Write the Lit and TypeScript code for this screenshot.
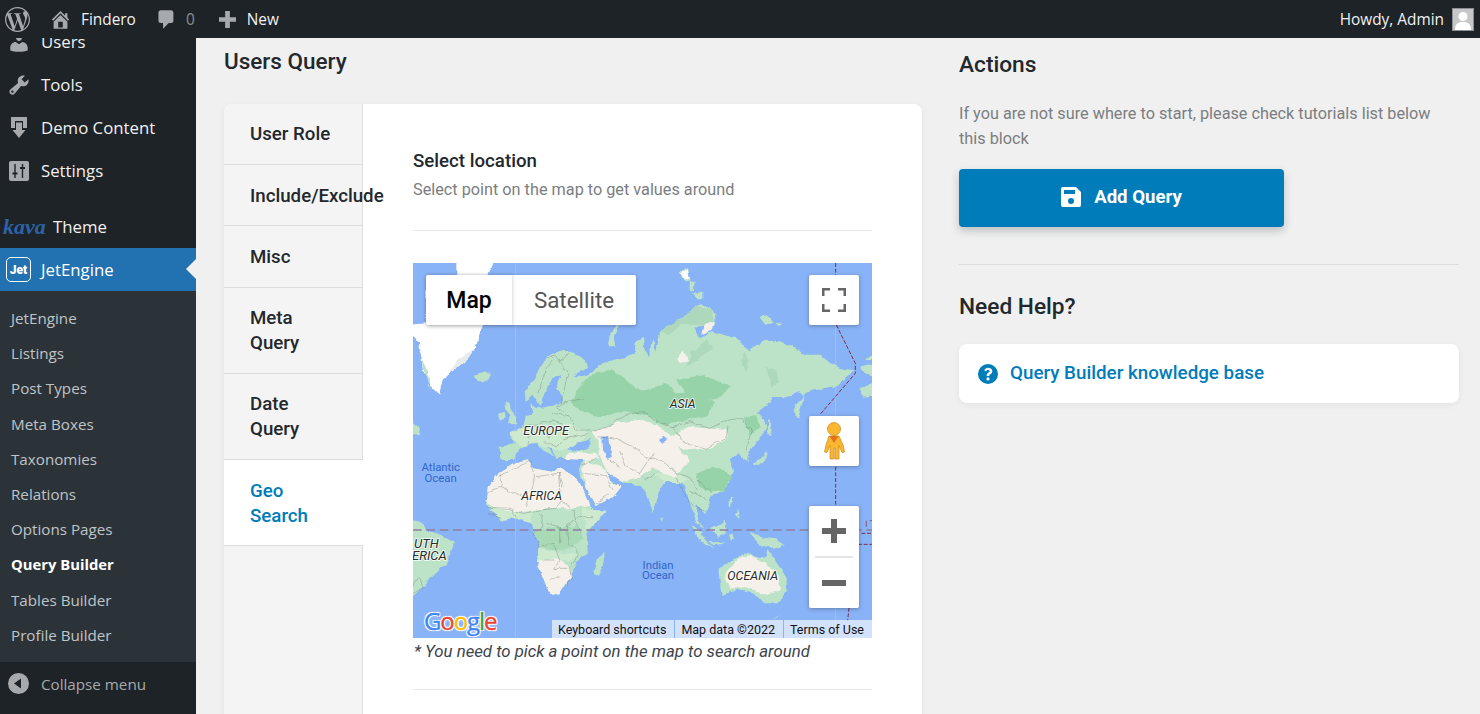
import { LitElement, html, svg, css } from "lit";
import { customElement } from "lit/decorators.js";

const WP = "M21.469 6.825c.84 1.537 1.318 3.3 1.318 5.175 0 3.979-2.156 7.456-5.363 9.325l3.295-9.527c.615-1.54.82-2.771.82-3.864 0-.405-.026-.78-.07-1.11m-7.981.105c.647-.03 1.232-.105 1.232-.105.582-.075.514-.93-.067-.899 0 0-1.755.135-2.88.135-1.064 0-2.85-.15-2.85-.15-.585-.03-.661.855-.075.885 0 0 .54.061 1.125.09l1.68 4.605-2.37 7.08L5.354 6.9c.649-.03 1.234-.1 1.234-.1.585-.075.516-.93-.065-.896 0 0-1.746.138-2.874.138-.2 0-.438-.008-.69-.015C4.911 3.15 8.235 1.215 12 1.215c2.809 0 5.365 1.072 7.286 2.833-.046-.003-.091-.009-.141-.009-1.06 0-1.812.923-1.812 1.914 0 .89.513 1.643 1.06 2.531.411.72.89 1.643.89 2.977 0 .915-.354 1.994-.821 3.479l-1.075 3.585-3.9-11.61.001.014zM12 22.784c-1.059 0-2.081-.153-3.048-.437l3.237-9.406 3.315 9.087c.024.053.05.101.078.149-1.12.393-2.325.609-3.582.609M1.211 12c0-1.564.336-3.05.935-4.39L7.29 21.709C3.694 19.96 1.212 16.271 1.211 12M12 0C5.385 0 0 5.385 0 12s5.385 12 12 12 12-5.385 12-12S18.615 0 12 0";
const HOME = "M16 8.5l1.53 1.53-1.06 1.06L10 4.62l-6.47 6.47-1.06-1.06L10 2.5l4 4v-2h2v4zm-6-2.46l6 5.99V18H4v-5.97zM12 17v-5H8v5h4z";
const COMMENT = "M5 2h9c1.1 0 2 .9 2 2v7c0 1.1-.9 2-2 2h-2l-5 5v-5H5c-1.1 0-2-.9-2-2V4c0-1.1.9-2 2-2z";
const USERS = "M10 9.25c-2.27 0-2.73-3.44-2.73-3.44C7 4.02 7.82 2 9.97 2c2.16 0 2.98 2.02 2.71 3.81 0 0-.41 3.44-2.68 3.44zm0 2.57L12.72 10c2.39 0 4.52 2.33 4.52 4.53v2.49s-3.65 1.13-7.24 1.13c-3.65 0-7.24-1.13-7.24-1.13v-2.49c0-2.25 1.94-4.48 4.47-4.48z";
const TOOLS = "M16.68 9.77c-1.34 1.34-3.3 1.67-4.95.99l-5.41 6.52c-.99.99-2.59.99-3.58 0s-.99-2.59 0-3.57l6.52-5.42c-.68-1.65-.35-3.61.99-4.95 1.28-1.28 3.12-1.62 4.72-1.06l-2.89 2.89 2.82 2.82 2.86-2.87c.53 1.58.18 3.39-1.08 4.67zM3.81 16.21c.4.39 1.04.39 1.43 0 .4-.4.4-1.04 0-1.43-.39-.4-1.03-.4-1.43 0-.39.39-.39 1.03 0 1.43z";

const LAND: string[] = [
  // Eurasia
  "338,425 335,395 350,375 372,340 395,300 405,285 440,272 470,275 500,290 525,312 528,325 495,335 482,348 505,352 540,335 560,312 600,300 640,290 665,280 668,245 690,232 695,270 705,292 718,240 730,275 741,219 771,194 811,174 851,134 866,129 911,159 906,194 871,194 846,204 856,234 896,214 931,224 966,234 991,254 1006,271 1056,239 1101,244 1151,264 1171,284 1221,284 1251,309 1281,324 1321,331 1306,349 1266,379 1231,384 1191,394 1171,404 1151,399 1111,414 1081,414 1056,439 1031,459 1051,474 1060,500 1050,525 1030,545 1012,570 1000,602 985,590 975,578 950,595 960,630 950,670 915,700 890,705 890,735 880,760 862,742 845,735 858,785 872,808 850,790 832,735 816,680 801,665 781,670 761,655 741,685 721,760 701,700 681,675 655,668 630,668 600,650 575,630 580,650 600,668 625,680 600,712 548,735 525,695 505,650 500,620 510,600 480,597 455,597 445,590 430,597 415,570 395,545 410,575 425,592 405,585 372,552 340,556 318,570 302,600 262,600 260,560 305,552 290,520 330,505 338,470 358,462 352,425 372,445 420,437 450,422 440,405 428,380 445,345 420,355 400,385 380,440 362,408",
  // Africa
  "218,725 225,680 255,640 300,610 345,598 360,625 415,635 440,625 492,652 515,700 540,750 580,752 555,780 520,820 525,880 490,905 475,950 440,1000 410,1005 395,965 372,905 380,860 360,810 355,780 300,775 265,780 235,755",
  // South America
  "-20,780 30,785 40,810 85,825 122,845 120,860 100,910 60,945 30,980 10,1000 -20,1035",
  // Australia
  "916,930 966,895 1006,880 1026,890 1061,890 1066,870 1091,905 1121,955 1121,990 1091,1030 1056,1030 1021,1000 971,990 926,1005 921,970",
  // New Guinea
  "1010,815 1050,830 1090,835 1115,855 1100,865 1060,860 1030,850",
  // UK, Ireland
  "285,422 298,450 312,490 285,490 292,465 275,445", "258,460 275,455 278,475 262,482",
  // Iceland
  "185,344 215,334 235,344 225,364 195,364",
  // Novaya Zemlya
  "620,195 605,230 610,265 590,255 585,235 605,200",
  // Svalbard / Arctic islands
  "800,35 825,25 832,60 815,70", "830,65 845,65 842,90 830,90", "840,95 868,100 868,118 850,118",
  "1040,175 1060,165 1085,185 1055,195", "1090,185 1110,190 1095,195",
  // Kamchatka strip, Sakhalin
  "1141,470 1150,430 1175,405 1165,440 1155,475", "1065,480 1075,495 1075,530 1065,515",
  // Japan
  "1015,610 1045,595 1065,570 1060,595 1040,615", "970,770 975,745 980,760",
  // Alaska
  "1340,325 1400,305 1400,345 1355,345", "1340,385 1400,360 1400,405 1350,410", "1360,300 1400,270 1400,300",
  // Madagascar, Sri Lanka
  "542,945 555,895 575,878 570,915 555,950", "737,775 746,775 745,790",
  // Indonesia
  "835,795 860,815 885,850 905,860 880,855 850,830", "890,805 920,795 935,782 938,820 915,830", "945,825 955,820 965,835 950,845", "885,845 940,850 905,855",
  "950,712 958,710 955,735 950,740", "966,760 980,765 978,778",
  // New Zealand
  "1090,1075 1110,1060 1095,1075 1080,1080",
  // Greenland SW rim
  "25,300 45,330 50,390 35,340", "-20,470 15,500 22,520 -20,520",
];
const DARK: string[] = [
  "470,430 500,385 530,345 600,330 650,370 690,395 760,370 790,400 860,395 905,430 880,470 770,490 700,465 620,455 555,475 500,450",
  "790,360 870,345 960,380 900,420 820,410",
  "850,640 905,620 960,650 930,690 890,695 860,680",
  "720,460 790,470 760,500 730,490",
  "990,470 1030,465 1040,500 1010,530",
];
const MID: string[] = [
  "360,815 400,805 440,800 500,800 510,835 470,865 420,875 380,855",
];
const TUNDRA: string[] = [
  "835,280 880,240 900,265 855,300 820,320", "741,219 771,194 811,174 851,134 900,150 905,190 850,195 800,195 760,225",
  "1060,320 1090,330 1100,370 1075,380", "990,275 1010,300 995,340 985,300",
];
const SAND: string[] = [
  "535,515 600,490 680,480 745,502 770,532 830,500 940,510 945,530 900,562 840,570 790,558 830,600 790,650 720,625 680,650 625,665 585,640 560,590 560,540",
  "505,625 520,600 578,630 595,668 625,680 600,712 548,735 525,695",
  "462,578 550,578 560,598 510,600 455,596",
  "218,725 225,680 255,640 300,610 345,598 360,625 415,635 440,625 492,652 515,700 530,735 480,745 400,745 330,755 250,745",
  "372,905 430,895 470,920 475,950 440,1000 410,1005 395,965",
  "935,945 970,900 1010,885 1060,910 1095,950 1105,990 1060,1005 1000,985 950,985",
  "792,290 815,275 825,300 800,310",
  "875,190 905,190 895,210 868,222",
];
const LIGHT: string[] = [
  "230,745 300,745 350,740 360,790 300,775 265,780", "505,745 540,750 580,752 555,780 520,810 510,775",
  "380,865 440,880 500,880 470,905 430,900 372,905", "290,520 335,505 450,490 520,510 500,560 430,570 370,550 320,560",
  "720,640 800,640 830,660 790,670 750,660",
];
const WATER: string[] = [
  "462,568 490,548 530,540 528,565 500,575",
  "568,530 585,528 590,560 600,590 585,596 570,570",
  "738,540 752,530 762,540 745,550",
];
const BORDERS: string[] = [
  "405,290 425,285 440,300 470,280", "375,400 390,350 425,290", "440,300 465,340 450,400 445,430 430,440 450,455", "445,430 510,415", "420,460 470,470 490,510 530,510",
  "340,500 420,480 450,490", "395,545 430,560 450,540 520,520", "380,500 410,540", "345,555 350,510",
  "535,515 600,490 640,465 690,455 740,490 780,500 830,485 890,505 945,480 985,475 1015,515 1000,570",
  "780,500 810,545 880,565 940,530 945,500", "560,530 620,540 660,560 700,590 740,600 790,640 830,650 850,690", "620,570 640,620 680,640 720,580",
  "590,600 620,620", "505,615 560,590", "515,640 580,650 600,690", "548,730 590,700", "680,640 700,660 730,640", "790,650 810,700 840,740 880,750", "830,690 880,720", "850,660 890,690",
  "262,645 305,625 350,600 365,650 440,640 450,680", "265,640 262,680 220,700", "262,680 325,710", "365,650 355,700 340,740", "440,640 445,720 480,750 490,790 510,820", "225,742 290,745 330,760", "330,760 380,750 430,745 450,720",
  "380,760 390,800 360,820 380,860 420,850 440,900 425,925 470,925 500,880 470,850 460,800 500,770 540,770", "430,800 470,820", "400,790 440,800 440,850",
  "395,900 425,900", "470,925 475,955 460,975", "225,760 265,775", "300,745 310,775", "410,960 440,950",
  "0,975 20,950 30,985", "0,1000 25,985",
];
const poly = (pts: string[], cls: string) => pts.map((p) => svg`<polygon class=${cls} points=${p}></polygon>`);

@customElement("world-map")
class WorldMap extends LitElement {
  static styles = css`
    :host { display: block; position: relative; width: 459px; height: 375px; overflow: hidden; background: #89b3f7; font-family: Roboto, sans-serif; }
    svg.world { display: block; width: 459px; height: 375px; }
    .land { fill: #bce3c8; }
    .dark { fill: #97d3a8; }
    .mid { fill: #a9dab6; }
    .tundra { fill: #add8bb; }
    .sand { fill: #f5f1ea; }
    .light { fill: #cdeacf; }
    .water { fill: #89b3f7; }
    .ice { fill: #fff; }
    .ice2 { fill: #e8ebe9; }
    .border { fill: none; stroke: #6f7f73; stroke-width: 2; opacity: .6; }
    .label { font: italic 400 39px Roboto, sans-serif; fill: #2b2b2b; stroke: rgba(255,255,255,.8); stroke-width: 6; paint-order: stroke; stroke-linejoin: round; }
    .ocean { font: 400 34px Roboto, sans-serif; fill: #2f67c9; text-anchor: middle; }
    .grid { stroke: #a9c7f5; stroke-width: 2; fill: none; }
    .eq { stroke: #8f7e9e; stroke-width: 4; stroke-dasharray: 26 14; fill: none; }
    .dl { stroke: #7d2d48; stroke-width: 3; stroke-dasharray: 12 5; fill: none; }
    .dl2 { stroke: #8f6a90; stroke-width: 4; stroke-dasharray: 18 10; fill: none; }
    .glogo { position: absolute; left: 11px; top: 341px; font: 400 24px "Open Sans", sans-serif; letter-spacing: -1.1px; line-height: 34px; text-shadow: -1px -1px 0 #fff, 1px -1px 0 #fff, -1px 1px 0 #fff, 1px 1px 0 #fff, 0 0 3px #fff; -webkit-text-stroke: .4px currentColor; }
    .b { color: #4285f4; } .r { color: #ea4335; } .y { color: #fbbc05; } .g { color: #34a853; }
    .ctl { position: absolute; background: #fff; border-radius: 2px; box-shadow: 0 1px 4px rgba(0,0,0,.3); display: flex; align-items: center; justify-content: center; }
    .types { left: 13px; top: 12px; width: 210px; height: 50px; justify-content: flex-start; font-size: 22.400px; }
    .tmap { width: 86px; height: 50px; display: flex; align-items: center; justify-content: center; color: #000; font-weight: 500; font-size: 23px; box-shadow: 1px 0 3px rgba(0,0,0,.15); }
    .tsat { flex: 1; text-align: center; color: #565656; }
    .full { left: 396px; top: 12px; width: 50px; height: 50px; }
    .peg { left: 396px; top: 153px; width: 50px; height: 50px; }
    .zoom { left: 396px; top: 243px; width: 50px; height: 102px; flex-direction: column; }
    .zoom i { display: block; width: 38px; height: 2px; background: #e6e6e6; }
    .zoom div { flex: 1; display: flex; align-items: center; justify-content: center; }
    .attr { position: absolute; right: 0; bottom: 0; height: 18px; display: flex; font-size: 12.500px; line-height: 19px; color: #111; }
    .attr span { background: rgba(255,255,255,.62); padding: 0 8px 0 6px; margin-left: 1px; white-space: nowrap; }
  `;
  render() {
    return html`
      <svg class="world" viewBox="0 9 1377 1125">
        <defs>
          <filter id="coast" filterUnits="userSpaceOnUse" x="-40" y="-40" width="1460" height="1220" color-interpolation-filters="sRGB">
            <feTurbulence type="fractalNoise" baseFrequency=".035" numOctaves="3" seed="4" result="n"></feTurbulence>
            <feDisplacementMap in="SourceGraphic" in2="n" scale="16" xChannelSelector="R" yChannelSelector="G"></feDisplacementMap>
          </filter>
        </defs>
        <line class="grid" x1="307" y1="9" x2="307" y2="1134"></line>
        <line class="grid" x1="1268" y1="9" x2="1268" y2="1134"></line>
        <g filter="url(#coast)">
          <polygon class="ice" points="130,-20 245,-20 225,50 210,195 195,235 185,265 165,295 130,325 90,355 78,405 50,375 30,330 25,290 15,250 -20,195 40,190 40,50 130,50"></polygon>
          <polygon class="ice2" points="185,265 165,295 130,325 108,340 135,300 160,280"></polygon>
          ${poly(LAND, "land")}
          ${poly(LIGHT, "light")}
          ${poly(TUNDRA, "tundra")}
          ${poly(DARK, "dark")}
          ${poly(MID, "mid")}
          ${poly(SAND, "sand")}
          ${poly(WATER, "water")}
          <polygon class="ice" points="805,40 825,28 830,55 812,62"></polygon>
          ${BORDERS.map((p) => svg`<polyline class="border" points=${p}></polyline>`)}
        </g>
        <line class="eq" x1="0" y1="810" x2="1377" y2="810"></line>
        <path class="dl" d="M1268 9V50M1270 195L1327 310V340L1220 465M1268 620V738M1308 1043L1304 1082M1345 820H1377M1335 853H1377"></path>
        <path class="dl2" d="M1360 800V782H1377"></path>
        <text class="label" x="331" y="524" textLength="137" lengthAdjust="spacingAndGlyphs">EUROPE</text>
        <text class="label" x="770" y="443" textLength="78" lengthAdjust="spacingAndGlyphs">ASIA</text>
        <text class="label" x="325" y="721" textLength="122" lengthAdjust="spacingAndGlyphs">AFRICA</text>
        <text class="label" x="943" y="961" textLength="152" lengthAdjust="spacingAndGlyphs">OCEANIA</text>
        <text class="label"><tspan x="3" y="865">UTH</tspan><tspan x="-3" y="900">ERICA</tspan></text>
        <text class="ocean"><tspan x="83" y="632">Atlantic</tspan><tspan x="83" y="666">Ocean</tspan></text>
        <text class="ocean"><tspan x="735" y="927">Indian</tspan><tspan x="735" y="958">Ocean</tspan></text>
      </svg>
      <div class="glogo"><span class="b">G</span><span class="r">o</span><span class="y">o</span><span class="b">g</span><span class="g">l</span><span class="r">e</span></div>
      <div class="attr"><span>Keyboard shortcuts</span><span>Map data ©2022</span><span>Terms of Use</span></div>
      <div class="ctl types"><div class="tmap">Map</div><div class="tsat">Satellite</div></div>
      <div class="ctl full">
        <svg width="24" height="24" viewBox="0 0 24 24" fill="#666"><path d="M0 0h8v2.500H2.500V8H0zM16 0h8v8h-2.500V2.500H16zM0 16h2.500v5.500H8V24H0zM21.500 16H24v8h-8v-2.500h5.500z"></path></svg>
      </div>
      <div class="ctl peg">
        <svg width="22" height="38" viewBox="0 0 22 38">
          <circle cx="11" cy="7" r="6.500" fill="#fdb62f" stroke="#c58a1c" stroke-width=".7"></circle>
          <path d="M6 14h10l4 9 1.500 7-2.500.5-3-7V37h-4V26h-1v11H7V23.500l-3 7-2.500-.5L3 23z" fill="#fdb62f" stroke="#c58a1c" stroke-width=".7"></path>
          <path d="M6.500 14h9L11 21z" fill="#e2711d"></path>
        </svg>
      </div>
      <div class="ctl zoom">
        <div><svg width="24" height="24" viewBox="0 0 24 24" fill="#666"><path d="M9 0h6v9h9v6h-9v9H9v-9H0V9h9z"></path></svg></div>
        <i></i>
        <div><svg width="24" height="6" viewBox="0 0 24 6" fill="#666"><rect width="24" height="6"></rect></svg></div>
      </div>
    `;
  }
}

@customElement("app-root")
export class AppRoot extends LitElement {
  static styles = css`
    :host { display: block; width: 100%; height: 100vh; overflow: hidden; font-family: Roboto, sans-serif; background: #f0f0f0; color: #23282d; }
    .bar { height: 38px; background: #1d2327; display: flex; align-items: center; font-family: "Open Sans", sans-serif; font-size: 15.400px; color: #f0f0f1; }
    .bar svg { fill: #a7aaad; display: block; flex: none; }
    .wp { margin-left: 5px; }
    .home { margin-left: 19px; }
    .site { margin-left: 9px; }
    .cm { margin-left: 19px; }
    .cnt { margin-left: 8px; color: #8c8f94; }
    .plus { margin-left: 24px; }
    .new { margin-left: 11px; }
    .howdy { margin-left: auto; }
    .avatar { margin: 0 6px 0 8px; width: 22px; height: 23px; background: #c7c7c7; border: 1px solid #8c8f94; box-sizing: border-box; }
    .avatar svg { fill: #fff; }

    .body { display: flex; height: 676px; }
    .side { width: 196px; flex: none; background: #1d2327; display: flex; flex-direction: column; overflow: hidden; font-family: "Open Sans", sans-serif; color: #f0f0f1; }
    .item { height: 43px; flex: none; display: flex; align-items: center; font-size: 16.800px; position: relative; box-sizing: border-box; }
    .item svg { fill: #a7aaad; flex: none; display: block; }
    .ic { width: 41px; flex: none; display: flex; justify-content: center; padding-right: 3px; box-sizing: border-box; }
    .users { margin-top: -18px; }
    .theme { margin-top: 13px; }
    .kava { font: italic 700 22px "Liberation Serif", serif; color: #2c62a6; width: 53px; padding-left: 3px; box-sizing: border-box; flex: none; }
    .active { background: #2271b1; color: #fff; }
    .jet { width: 25px; height: 25px; margin-left: 6px; margin-right: 10px; border: 1px solid #fff; border-radius: 5px; box-sizing: border-box; flex: none; display: flex; align-items: center; justify-content: center; font: 900 12px Roboto, sans-serif; color: #fff; }
    .active::after { content: ""; position: absolute; right: 0; top: 11px; border: 10.500px solid transparent; border-left: 0; border-right-color: #f0f0f0; }
    .sub { background: #2c3338; padding: 9.500px 0; flex: none; }
    .sub div { height: 35.200px; display: flex; align-items: center; padding-left: 11px; font-size: 15.200px; color: #bfc4c8; }
    .sub div.cur { color: #fff; font-weight: 700; font-size: 14.800px; }
    .collapse { flex: 1; display: flex; align-items: flex-start; padding: 11px 0 0 8px; font-size: 15.200px; color: #a7aaad; }
    .collapse span { margin-left: 12px; line-height: 22px; }
    .collapse svg { fill: #a7aaad; display: block; }

    .main { flex: 1; min-width: 0; display: flex; overflow: hidden; padding-left: 28px; }
    .left { width: 698px; flex: none; }
    .title { margin: 8px 0 28px; font-size: 22.500px; font-weight: 500; line-height: 30px; color: #23282d; }
    .card { background: #fff; border-radius: 8px 8px 0 0; display: flex; height: 620px; overflow: hidden; box-shadow: 0 2px 6px rgba(35,40,45,.06); }
    .tabs { width: 139px; flex: none; background: #f4f4f4; border-right: 1px solid #ddd; box-sizing: border-box; }
    .tab { font-size: 18.700px; font-weight: 500; line-height: 25px; border-bottom: 1px solid #ddd; color: #23282d; position: relative; z-index: 1; box-sizing: border-box; width: 139px; padding: 0 0 0 26px; display: flex; flex-direction: column; justify-content: center; white-space: nowrap; }
    .tab.one { height: 61px; }
    .tab.mid { height: 62px; padding-top: 1px; }
    .tab.two { height: 86px; }
    .tab.lo { padding-top: 2px; }
    .tab.on { background: #fff; color: #007cba; }
    .content { flex: 1; padding: 45px 50px 0; min-width: 0; }
    .h { font-size: 18.700px; font-weight: 500; line-height: 24px; color: #23282d; }
    .d { font-size: 16.250px; line-height: 24px; color: #7b7e81; margin-top: 5px; }
    .hr { height: 1px; background: #e9e9ea; }
    .hr.a { margin: 28px 0 32px; }
    .note { font-size: 16.750px; font-style: italic; line-height: 27px; color: #3c434a; padding-left: 1px; }
    .hr.b { margin-top: 24px; }

    .right { width: 500px; flex: none; margin-left: 37px; }
    .rt { font-size: 22.700px; font-weight: 500; line-height: 30px; margin: 0; color: #23282d; }
    .rt.top { margin-top: 12px; }
    .desc { font-size: 16.250px; line-height: 25px; color: #7b7e81; margin: 21px 0 18px; }
    .btn { width: 325px; height: 58px; background: #007cba; border-radius: 4px; box-shadow: 0 4px 8px rgba(35,40,45,.24); color: #fff; display: flex; align-items: center; justify-content: center; gap: 13px; font-size: 18.600px; font-weight: 700; box-sizing: border-box; padding-bottom: 2px; }
    .btn svg { fill: #fff; display: block; }
    .rule { height: 1px; background: #dcdcde; margin: 37px 0 27px; }
    .help { height: 59px; background: #fff; border-radius: 8px; margin-top: 22px; display: flex; align-items: center; padding: 0 0 2px 19px; box-sizing: border-box; gap: 12px; color: #007cba; font-size: 18.800px; font-weight: 500; box-shadow: 0 2px 6px rgba(35,40,45,.06); }
    .help svg { fill: #007cba; display: block; margin-top: 2px; }
  `;
  icon(d: string, s = 24) {
    return html`<div class="ic"><svg width=${s} height=${s} viewBox="0 0 20 20"><path d=${d}></path></svg></div>`;
  }
  render() {
    const sub = ["JetEngine", "Listings", "Post Types", "Meta Boxes", "Taxonomies", "Relations", "Options Pages", "Query Builder", "Tables Builder", "Profile Builder"];
    return html`
      <div class="bar">
        <svg class="wp" width="25" height="25" viewBox="0 0 24 24"><path d=${WP}></path></svg>
        <svg class="home" width="23" height="23" viewBox="0 0 20 20"><path d=${HOME}></path></svg>
        <span class="site">Findero</span>
        <svg class="cm" width="23" height="23" viewBox="0 0 20 20"><path d=${COMMENT}></path></svg>
        <span class="cnt">0</span>
        <svg class="plus" width="17" height="17" viewBox="0 0 18 18"><path d="M6.500 0h5v6.500H18v5h-6.500V18h-5v-6.500H0v-5h6.500z"></path></svg>
        <span class="new">New</span>
        <span class="howdy">Howdy, Admin</span>
        <div class="avatar"><svg width="20" height="21" viewBox="0 0 20 21"><circle cx="10" cy="7.500" r="4.500"></circle><path d="M2 21c0-6 3-8 8-8s8 2 8 8z"></path></svg></div>
      </div>
      <div class="body">
        <nav class="side">
          <div class="item users">${this.icon(USERS)}Users</div>
          <div class="item">${this.icon(TOOLS)}Tools</div>
          <div class="item"><div class="ic"><svg width="20" height="22" viewBox="0 0 20 22"><path d="M2 0h16v11h-4V4H6v7H2z"></path><path d="M7 5.500h6V13h3.500L10 21 3.500 13H7z"></path></svg></div>Demo Content</div>
          <div class="item"><div class="ic"><svg width="20" height="20" viewBox="0 0 20 20"><rect width="20" height="20" rx="2"></rect><path d="M6 3v14M13.500 3v14" stroke="#1d2327" stroke-width="1.400" fill="none"></path><path d="M3.500 12.500h5M11 7h5" stroke="#1d2327" stroke-width="1.800" fill="none"></path></svg></div>Settings</div>
          <div class="item theme"><span class="kava">kava</span>Theme</div>
          <div class="item active"><div class="jet">Jet</div>JetEngine</div>
          <div class="sub">${sub.map((s) => html`<div class=${s === "Query Builder" ? "cur" : ""}>${s}</div>`)}</div>
          <div class="collapse">
            <svg width="21" height="21" viewBox="0 0 21 21"><path d="M10.500 0a10.500 10.500 0 1 0 0 21 10.500 10.500 0 0 0 0-21zM13 5.500v10L6 10.500z"></path></svg>
            <span>Collapse menu</span>
          </div>
        </nav>
        <main class="main">
          <section class="left">
            <h1 class="title">Users Query</h1>
            <div class="card">
              <div class="tabs">
                <div class="tab one">User Role</div>
                <div class="tab one lo">Include/Exclude</div>
                <div class="tab mid">Misc</div>
                <div class="tab two"><span>Meta</span><span>Query</span></div>
                <div class="tab two"><span>Date</span><span>Query</span></div>
                <div class="tab two on lo"><span>Geo</span><span>Search</span></div>
              </div>
              <div class="content">
                <div class="h">Select location</div>
                <div class="d">Select point on the map to get values around</div>
                <div class="hr a"></div>
                <world-map></world-map>
                <div class="note">* You need to pick a point on the map to search around</div>
                <div class="hr b"></div>
              </div>
            </div>
          </section>
          <aside class="right">
            <h2 class="rt top">Actions</h2>
            <p class="desc">If you are not sure where to start, please check tutorials list below this block</p>
            <div class="btn"><svg width="20" height="20" viewBox="0 0 20 20"><path d="M2 0h13l5 5v13a2 2 0 0 1-2 2H2a2 2 0 0 1-2-2V2a2 2 0 0 1 2-2zm1 3v4h11V3zm7 8a3 3 0 1 0 0 6 3 3 0 0 0 0-6z" fill-rule="evenodd"></path></svg>Add Query</div>
            <div class="rule"></div>
            <h2 class="rt">Need Help?</h2>
            <div class="help"><svg width="20" height="20" viewBox="0 0 20 20"><path fill-rule="evenodd" d="M10 0a10 10 0 1 0 0 20 10 10 0 0 0 0-20zm.2 3.800c2.300 0 4.100 1.400 4.100 3.400 0 1.600-1 2.300-2 3-.7.400-1 .7-1 1.300v.500H8.700v-.700c0-1.200.6-1.900 1.500-2.500.8-.5 1.400-.9 1.400-1.500 0-.7-.7-1.200-1.500-1.200-.9 0-1.500.5-2.100 1.300L6.200 6.300c1-1.500 2.200-2.500 4-2.500zM10 13.300a1.600 1.600 0 1 1 0 3.200 1.600 1.600 0 0 1 0-3.200z"></path></svg>Query Builder knowledge base</div>
          </aside>
        </main>
      </div>
    `;
  }
}
void WorldMap;
